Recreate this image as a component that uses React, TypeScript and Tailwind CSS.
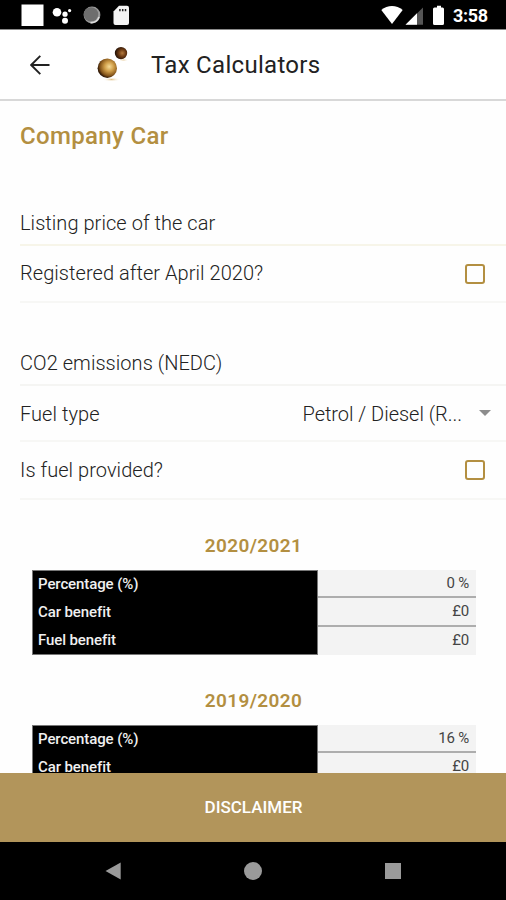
import { useState } from 'react';
import clsx from 'clsx';

interface TaxYear {
  year: string;
  rows: { label: string; value: string }[];
}

const taxYears: TaxYear[] = [
  {
    year: '2020/2021',
    rows: [
      { label: 'Percentage (%)', value: '0 %' },
      { label: 'Car benefit', value: '£0' },
      { label: 'Fuel benefit', value: '£0' },
    ],
  },
  {
    year: '2019/2020',
    rows: [
      { label: 'Percentage (%)', value: '16 %' },
      { label: 'Car benefit', value: '£0' },
      { label: 'Fuel benefit', value: '£0' },
    ],
  },
];

const StatusBar = () => (
  <div className="flex h-[30px] shrink-0 items-start border-b border-[#8a8a8a] bg-black">
    <svg className="h-[29px] w-[140px]" viewBox="0 0 140 29">
      <rect x="21.5" y="4.5" width="22" height="21.5" fill="#fff" />
      <circle cx="57" cy="12.2" r="4.3" fill="#fff" />
      <circle cx="65" cy="14.2" r="2.6" fill="#fff" />
      <circle cx="69.6" cy="10.6" r="1.6" fill="#fff" />
      <circle cx="65" cy="20.8" r="3" fill="#fff" />
      <circle cx="92" cy="15" r="8.4" fill="#9a9a9a" />
      <circle cx="91" cy="14.4" r="7.2" fill="#6e6e6e" />
      <path d="M99 17a8 8 0 0 1-8.500 5.600" stroke="#ddd" strokeWidth="1.6" fill="none" />
      <path d="M119 5.800h8a2 2 0 0 1 2 2v15.200a2 2 0 0 1-2 2h-11.500a2 2 0 0 1-2-2V11.500z" fill="#f4f4f4" />
      <path d="M119.900 9v2.200M122.700 9v2.200M125.500 9v2.200" stroke="#222" strokeWidth="1.500" />
    </svg>
    <svg className="ml-auto h-[29px] w-[70px]" viewBox="0 0 70 29">
      <path d="M0.300 10C6.500 4.800 15.500 4.800 21.700 10L11 24z" fill="#fff" />
      <path d="M42 7.500V24.700H24.500z" fill="#555" />
      <path d="M36 13.200V24.700H24.500z" fill="#fff" />
      <path d="M56 5.800h4v1.700h1.500a1.500 1.500 0 0 1 1.500 1.500v14.500a1.500 1.500 0 0 1-1.500 1.500h-8a1.500 1.500 0 0 1-1.500-1.500V9a1.500 1.500 0 0 1 1.500-1.500h2.500z" fill="#fff" />
    </svg>
    <span className="mr-[18px] ml-[2px] w-[35px] text-[18px] leading-[32px] font-bold tracking-[-0.3px] whitespace-nowrap text-white">3:58</span>
  </div>
);

const Logo = () => (
  <svg className="ml-[45px] h-[40px] w-[34px]" viewBox="0 0 34 40">
    <defs>
      <radialGradient id="bigBall" cx="0.6" cy="0.42" r="0.6">
        <stop offset="0" stopColor="#f6dc98" />
        <stop offset="0.4" stopColor="#cf9d48" />
        <stop offset="0.78" stopColor="#85551a" />
        <stop offset="1" stopColor="#2a1404" />
      </radialGradient>
      <radialGradient id="smallBall" cx="0.6" cy="0.5" r="0.6">
        <stop offset="0" stopColor="#b47a3c" />
        <stop offset="0.5" stopColor="#6a3912" />
        <stop offset="1" stopColor="#1c0c04" />
      </radialGradient>
      <radialGradient id="ballShadow">
        <stop offset="0" stopColor="#e2c48c" />
        <stop offset="1" stopColor="#fff" stopOpacity="0" />
      </radialGradient>
    </defs>
    <ellipse cx="16.500" cy="34.500" rx="9" ry="2.200" fill="url(#ballShadow)" />
    <ellipse cx="28.500" cy="15" rx="5" ry="1.500" fill="url(#ballShadow)" />
    <circle cx="12.300" cy="23.200" r="9.700" fill="url(#bigBall)" />
    <circle cx="26" cy="8.100" r="6.200" fill="url(#smallBall)" />
  </svg>
);

const Header = () => (
  <header className="flex h-[71px] shrink-0 items-center border-b-2 border-[#d8d8d8] bg-white">
    <button aria-label="Back" className="ml-[30px]">
      <svg className="h-5 w-5" viewBox="0 0 20 20" fill="none" stroke="#222" strokeWidth="1.900">
        <path d="M19.500 10H1.500M10.300 0.900L1.200 10l9.100 9.100" />
      </svg>
    </button>
    <Logo />
    <h1 className="mt-px ml-[22px] text-[24px] font-normal tracking-[0.3px] text-[#222]">Tax Calculators</h1>
  </header>
);

interface CheckRowProps {
  label: string;
  className?: string;
}

const CheckRow = ({ label, className }: CheckRowProps) => {
  const [checked, setChecked] = useState(false);

  return (
    <label className={clsx('flex items-center justify-between border-b-2 border-[#f7f7f5]', className)}>
      <span className="-mt-px">{label}</span>
      <input type="checkbox" className="sr-only" checked={checked} onChange={() => setChecked(!checked)} />
      <span className={clsx('mr-[21px] h-5 w-5 rounded-[3px] border-2 border-[#b38f41]', checked && 'bg-[#b38f41]')} />
    </label>
  );
};

const YearTable = ({ year, rows }: TaxYear) => (
  <section className="mb-[34px]">
    <h3 className="pl-px text-center text-[19px] leading-6 font-semibold tracking-[0.4px] text-[#b38f41]">{year}</h3>
    <div className="mt-3 mr-[30px] ml-8 flex h-[85px]">
      <div className="flex w-[286px] flex-col border border-[#777] bg-black text-[15px] font-medium tracking-[-0.1px] text-[#f0f0f0]">
        {rows.map((row) => (
          <div key={row.label} className="h-[28px] pl-[5px] leading-[26px] odd:last:leading-[28px]">{row.label}</div>
        ))}
      </div>
      <div className="flex flex-1 flex-col bg-[#f3f3f3] text-[15px] tracking-[-0.2px] text-[#444]">
        {rows.map((row) => (
          <div key={row.label} className="h-[28.400px] border-b-2 border-[#adadad] pr-[7px] text-right leading-[27px] last:border-b-0">
            {row.value}
          </div>
        ))}
      </div>
    </div>
  </section>
);

const App = () => {
  return (
    <div className="flex h-[900px] w-[506px] flex-col overflow-hidden bg-white font-['Roboto',sans-serif]">
      <StatusBar />
      <Header />
      <main className="min-h-0 flex-1 overflow-hidden bg-[#fefefe]">
        <h2 className="mt-[19px] ml-5 text-[24px] leading-8 font-medium tracking-[0.35px] text-[#b38f41]">Company Car</h2>
        <div className="mt-12 ml-5 text-[20px] font-light tracking-[0.05px] text-[#222]">
          <div className="h-[46px] border-b-2 border-[#f7f5e9] leading-[46px]">Listing price of the car</div>
          <CheckRow label="Registered after April 2020?" className="h-[57px]" />
          <div className="h-[83px] border-b-2 border-[#f5f5f3] pt-[39px] leading-[43px]">CO2 emissions (NEDC)</div>
          <div className="flex h-[56px] items-center border-b-2 border-[#f7f7f5]">
            <span className="mt-px">Fuel type</span>
            <span className="mt-px ml-auto tracking-[-0.03px]">Petrol / Diesel (R...</span>
            <svg className="mr-[15px] ml-[17px] h-[6px] w-[12px]" viewBox="0 0 12 6">
              <path d="M0 0h12L6 6z" fill="#8c8c8c" />
            </svg>
          </div>
          <CheckRow label="Is fuel provided?" className="h-[58px]" />
        </div>
        <div className="mt-[34px]">
          {taxYears.map((taxYear) => (
            <YearTable key={taxYear.year} {...taxYear} />
          ))}
        </div>
      </main>
      <button className="h-[69px] shrink-0 bg-[#b2955b] pl-px text-[17px] font-medium text-white">DISCLAIMER</button>
      <nav className="flex h-[58px] shrink-0 items-center justify-between bg-black pr-[105px] pl-[105px]">
        <svg className="h-[18px] w-[16px]" viewBox="0 0 16 18">
          <path d="M15.700 0.500v17L0.500 9z" fill="#9a9a9a" />
        </svg>
        <span className="h-[18px] w-[18px] rounded-full bg-[#9a9a9a]" />
        <span className="h-4 w-4 bg-[#9a9a9a]" />
      </nav>
    </div>
  );
};

export default App;
